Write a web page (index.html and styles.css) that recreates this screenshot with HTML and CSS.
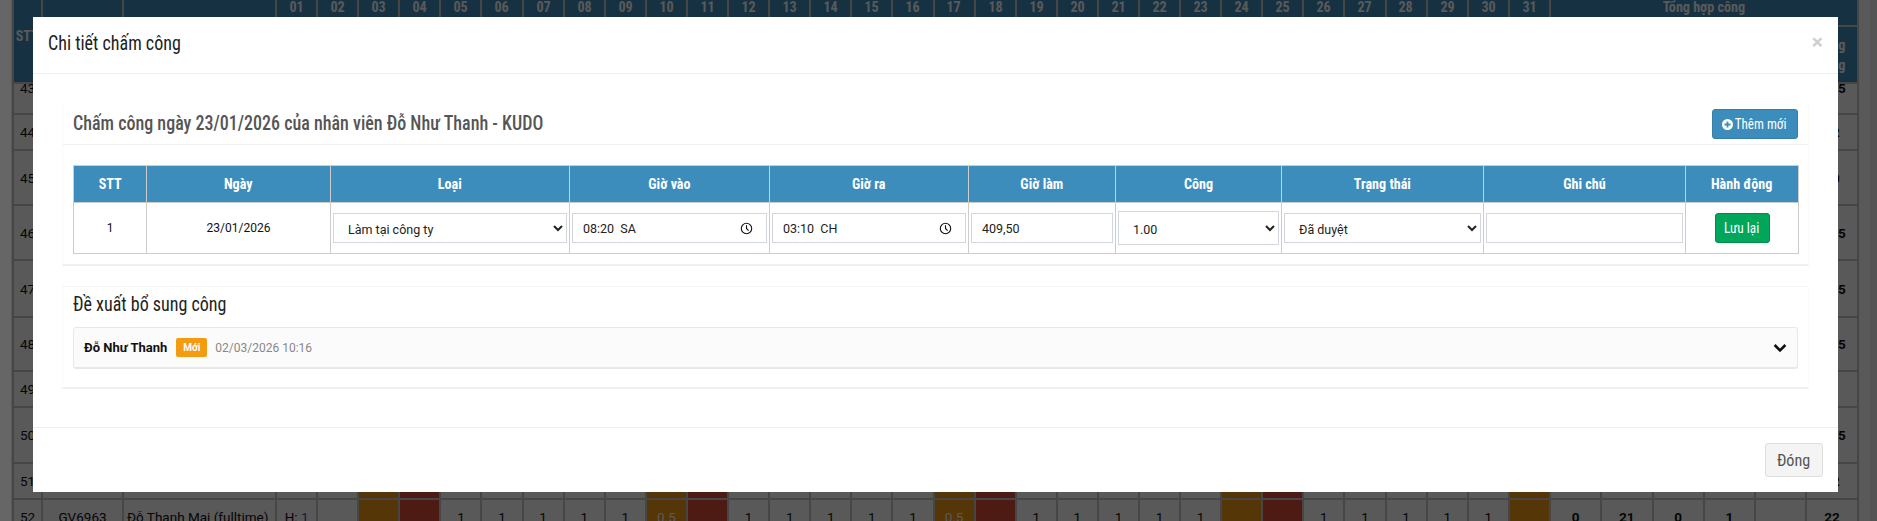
FILE: index.html
```html
<!DOCTYPE html>
<html lang="vi">
<head>
<meta charset="utf-8">
<title>Chi tiết chấm công</title>
<link rel="stylesheet" href="styles.css">
</head>
<body>
<main class="sheet">
  <table class="grid">
    <colgroup>
      <col class="c-stt"><col class="c-code"><col class="c-name"><col class="c-day" span="31"><col class="c-sum" span="6">
    </colgroup>
    <thead>
      <tr class="h1">
        <th rowspan="2"><span class="n">STT</span></th><th rowspan="2"></th><th rowspan="2"></th>
        <th><span class="n">01</span></th><th><span class="n">02</span></th><th><span class="n">03</span></th><th><span class="n">04</span></th><th><span class="n">05</span></th><th><span class="n">06</span></th><th><span class="n">07</span></th><th><span class="n">08</span></th><th><span class="n">09</span></th><th><span class="n">10</span></th><th><span class="n">11</span></th><th><span class="n">12</span></th><th><span class="n">13</span></th><th><span class="n">14</span></th><th><span class="n">15</span></th><th><span class="n">16</span></th><th><span class="n">17</span></th><th><span class="n">18</span></th><th><span class="n">19</span></th><th><span class="n">20</span></th><th><span class="n">21</span></th><th><span class="n">22</span></th><th><span class="n">23</span></th><th><span class="n">24</span></th><th><span class="n">25</span></th><th><span class="n">26</span></th><th><span class="n">27</span></th><th><span class="n">28</span></th><th><span class="n">29</span></th><th><span class="n">30</span></th><th><span class="n">31</span></th>
        <th colspan="6"><span class="n">Tổng hợp công</span></th>
      </tr>
      <tr class="h2">
        <th colspan="31"></th><th></th><th></th><th></th><th></th><th></th><th><span class="n">Tổng<br>công</span></th>
      </tr>
    </thead>
    <tbody>
      <tr class="r31"><td class="clip">43</td><td colspan="38"></td><td class="b clip">19.5</td></tr>
      <tr class="r36"><td>44</td><td colspan="38"></td><td class="b">22</td></tr>
      <tr class="r55"><td>45</td><td colspan="38"></td><td class="b">20</td></tr>
      <tr class="r55"><td>46</td><td colspan="38"></td><td class="b">21.5</td></tr>
      <tr class="r57"><td>47</td><td colspan="38"></td><td class="b">21.5</td></tr>
      <tr class="r54"><td>48</td><td colspan="38"></td><td class="b">21.5</td></tr>
      <tr class="r36"><td>49</td><td colspan="38"></td><td class="b">21</td></tr>
      <tr class="r56"><td>50</td><td colspan="38"></td><td class="b">21.5</td></tr>
      <tr class="r36"><td>51</td><td></td><td></td><td></td><td></td><td class="sat"></td><td class="sun"></td><td></td><td></td><td></td><td></td><td></td><td class="sat"></td><td class="sun"></td><td></td><td></td><td></td><td></td><td></td><td class="sat"></td><td class="sun"></td><td></td><td></td><td></td><td></td><td></td><td class="sat"></td><td class="sun"></td><td></td><td></td><td></td><td></td><td></td><td class="sat"></td><td></td><td></td><td></td><td></td><td></td><td class="b">22</td></tr>
      <tr class="r36"><td>52</td><td>GV6963</td><td class="name">Đỗ Thanh Mai (fulltime)</td><td>H: <span class="blue">1</span></td><td></td><td class="sat"></td><td class="sun"></td><td>1</td><td>1</td><td>1</td><td>1</td><td>1</td><td class="sat">0.5</td><td class="sun"></td><td>1</td><td>1</td><td>1</td><td>1</td><td>1</td><td class="sat">0.5</td><td class="sun"></td><td>1</td><td>1</td><td>1</td><td>1</td><td>1</td><td class="sat"></td><td class="sun"></td><td>1</td><td>1</td><td>1</td><td>1</td><td>1</td><td class="sat"></td><td class="b">0</td><td class="b">21</td><td class="b">0</td><td class="b">1</td><td></td><td class="b">22</td></tr>
    </tbody>
  </table>
</main>

<div class="backdrop"></div>

<section class="modal" role="dialog" aria-label="Chi tiết chấm công">
  <header class="modal-head">
    <h4 class="modal-title"><span class="narrow">Chi tiết chấm công</span></h4>
    <span class="close">×</span>
  </header>
  <div class="modal-body">
    <div class="portlet first">
      <div class="portlet-head">
        <h3 class="portlet-title"><span class="narrow">Chấm công ngày 23/01/2026 của nhân viên Đỗ Như Thanh - KUDO</span></h3>
        <button class="btn btn-add" type="button">
          <svg class="plus" viewBox="0 0 16 16" aria-hidden="true"><circle cx="8" cy="8" r="8" fill="#fff"/><path d="M8 3.6v8.8M3.6 8h8.8" stroke="#3c8dbc" stroke-width="2.6"/></svg>
          <span class="n">Thêm mới</span>
        </button>
      </div>
      <div class="portlet-main">
        <table class="detail">
          <colgroup>
            <col class="d1"><col class="d2"><col class="d3"><col class="d4"><col class="d5"><col class="d6"><col class="d7"><col class="d8"><col class="d9"><col class="d10">
          </colgroup>
          <thead>
            <tr><th><span class="n">STT</span></th><th><span class="n">Ngày</span></th><th><span class="n">Loại</span></th><th><span class="n">Giờ vào</span></th><th><span class="n">Giờ ra</span></th><th><span class="n">Giờ làm</span></th><th><span class="n">Công</span></th><th><span class="n">Trạng thái</span></th><th><span class="n">Ghi chú</span></th><th><span class="n">Hành động</span></th></tr>
          </thead>
          <tbody>
            <tr>
              <td>1</td>
              <td>23/01/2026</td>
              <td><select class="field"><option>Làm tại công ty</option></select></td>
              <td><div class="field time"><input class="time-input" type="text" value="08:20  SA" aria-label="Giờ vào"><svg class="clock" viewBox="0 0 14 14" aria-hidden="true"><circle cx="7" cy="7" r="5.6"/><path d="M7 3.6V7l2.2 2.2"/></svg></div></td>
              <td><div class="field time"><input class="time-input" type="text" value="03:10  CH" aria-label="Giờ ra"><svg class="clock" viewBox="0 0 14 14" aria-hidden="true"><circle cx="7" cy="7" r="5.6"/><path d="M7 3.6V7l2.2 2.2"/></svg></div></td>
              <td><input class="field text" type="text" value="409,50" aria-label="Giờ làm"></td>
              <td><select class="field tall"><option>1.00</option></select></td>
              <td><select class="field"><option>Đã duyệt</option></select></td>
              <td><input class="field text" type="text" aria-label="Ghi chú"></td>
              <td><button class="btn btn-save" type="button"><span class="save-label">Lưu lại</span></button></td>
            </tr>
          </tbody>
        </table>
      </div>
    </div>
    <div class="portlet second">
      <h4 class="sub-title"><span class="narrow">Đề xuất bổ sung công</span></h4>
      <div class="request">
        <strong class="who">Đỗ Như Thanh</strong>
        <span class="badge">Mới</span>
        <span class="when">02/03/2026 10:16</span>
        <svg class="chev" viewBox="0 0 14 10" aria-hidden="true"><path d="M1.6 2 7 7.4 12.4 2" /></svg>
      </div>
    </div>
  </div>
  <footer class="modal-foot">
    <button class="btn btn-close" type="button"><span class="close-label">Đóng</span></button>
  </footer>
</section>
</body>
</html>
```
FILE: styles.css
```css
* { box-sizing: border-box; }
html, body { margin: 0; height: 521px; overflow: hidden; }
body { background: #fff; font-family: Roboto, "Liberation Sans", sans-serif; font-size: 12px; color: #111; }

/* The page's condensed look: Roboto's narrow width, tightened a little further */
.narrow { display: inline-block; font-stretch: 75%; transform: scaleX(.9); transform-origin: left center; white-space: nowrap; }
.n { display: inline-block; font-stretch: 75%; transform: scaleX(.94); white-space: nowrap; }
.save-label, .close-label { display: inline-block; font-stretch: 75%; transform: scaleX(.95); white-space: nowrap; }

/* Sheet behind the dialog */
.sheet { padding-left: 12px; width: 1858px; margin-top: -13px; }
.grid { width: 1846px; table-layout: fixed; border-collapse: collapse; font-size: 13.5px; }
.c-stt { width: 29px; } .c-code { width: 81px; } .c-name { width: 153px; }
.c-day { width: 41.1px; } .c-sum { width: 51.3px; }
.grid th, .grid td { border: 2px solid #c8c8c8; padding: 0; text-align: center; overflow: hidden; white-space: nowrap; }
.grid th { background: #3c8dbc; color: #fff; font-weight: 700; font-size: 15px; line-height: 20px; }
.h1 { height: 38px; }
.h2 { height: 57px; }
.r31 { height: 31px; } .r36 { height: 36px; } .r54 { height: 54px; } .r55 { height: 55px; } .r56 { height: 56px; } .r57 { height: 57px; }
.grid td.clip { vertical-align: top; line-height: 9px; }
.grid td.name { text-align: left; padding-left: 3px; }
.grid td.b { font-weight: 700; }
.grid td.sat { background: #f39c12; color: #fff; }
.grid td.sun { background: #dd4b39; }
.blue { color: #0b5cad; }

.backdrop { position: fixed; inset: 0; background: rgba(0,0,0,.65); }
.backdrop::before { content: ""; position: absolute; left: 0; top: 0; bottom: 0; width: 11px; background: rgba(255,255,255,.08); }
.backdrop::after { content: ""; position: absolute; right: 0; top: 0; bottom: 0; width: 7px; background: rgba(0,0,0,.06); }

/* Dialog */
.modal { position: fixed; left: 33px; top: 17px; width: 1805px; height: 475px; background: #fff; display: flex; flex-direction: column; }
.modal-head { height: 57px; flex: none; display: flex; align-items: center; justify-content: space-between; padding: 0 15px; border-bottom: 1px solid #f0f0f0; }
.modal-title { margin: 0 0 4px; font-size: 20px; font-weight: 400; color: #222; }
.close { font-size: 21px; font-weight: 700; color: #cfcfcf; line-height: 1; margin-top: -6px; }

.modal-body { flex: 1; padding: 29px 29px 0; }
.portlet { background: #fff; border: 1px solid #fafafa; border-bottom: 2px solid #f0f0f0; padding: 0 10px; }
.first { border-top: 0; }
.second { border-top-color: #f4f4f4; margin-top: 20px; height: 103px; }
.portlet-head { height: 42px; display: flex; justify-content: space-between; align-items: flex-start; margin: 0 -10px; padding: 6px 10px 0; border-bottom: 1px solid #f2f2f2; }
.portlet-title { margin: 0; font-size: 20px; font-weight: 500; color: #555; line-height: 28px; }
.portlet-main { padding: 20px 0 10px; }
.sub-title { margin: 0; height: 40px; font-size: 20px; font-weight: 400; color: #222; line-height: 35px; }

.btn { border-radius: 3px; font-family: inherit; cursor: pointer; }
.btn-add { width: 86px; height: 30px; padding: 0; background: #3c8dbc; border: 1px solid #367fa9; color: #fff; font-size: 14px; display: flex; align-items: center; justify-content: center; gap: 0; }
.plus { width: 11px; height: 11px; }
.btn-save { width: 55px; height: 30px; padding: 0; background: #00a65a; border: 1px solid #008d4c; color: #fff; font-size: 14px; }
.btn-close { width: 58px; height: 34px; padding: 0; background: #f4f4f4; border: 1px solid #ddd; color: #555; font-size: 17px; }

.detail { width: 100%; table-layout: fixed; border-collapse: collapse; font-size: 12px; }
.d1 { width: 73px; } .d2 { width: 184px; } .d3 { width: 239px; } .d4 { width: 200px; } .d5 { width: 199px; } .d6 { width: 147px; } .d7 { width: 166px; } .d8 { width: 202px; } .d9 { width: 202px; } .d10 { width: 113px; }
.detail th, .detail td { border: 1px solid #cdcdcd; text-align: center; padding: 0 2px; }
.detail th { height: 37px; background: #3c8dbc; color: #fff; font-weight: 700; font-size: 15px; }
.detail td { height: 51px; }
.field { display: block; width: 100%; height: 30px; background: #fff; border: 1px solid #d2d6de; border-radius: 0; font: 12.5px Roboto, sans-serif; color: #222; padding: 1px 10px 0; }
select.field { padding: 2px 10px 0; }
.tall { height: 34px; }
.time { display: flex; align-items: center; padding: 1px 13px 0 10px; }
.time-input { flex: 1; min-width: 0; border: 0; padding: 0; outline: 0; font: inherit; color: inherit; white-space: pre; }
.clock { width: 13px; height: 13px; fill: none; stroke: #111; stroke-width: 1.2; }

.request { height: 42px; display: flex; align-items: center; background: #fbfbfb; border: 1px solid #e8e8e8; border-bottom-width: 2px; border-radius: 3px; padding: 0 10px; }
.who { font-size: 13px; font-weight: 700; color: #111; }
.badge { margin-left: 9px; width: 31px; height: 19px; line-height: 19px; text-align: center; background: #f39c12; color: #fff; font-size: 10px; font-weight: 700; border-radius: 2px; }
.when { margin-left: 8px; color: #888; font-size: 12px; }
.chev { margin-left: auto; width: 14px; height: 10px; fill: none; stroke: #111; stroke-width: 2.6; }

.modal-foot { height: 65px; flex: none; display: flex; justify-content: flex-end; align-items: flex-start; padding: 15px; border-top: 1px solid #f0f0f0; }
```
